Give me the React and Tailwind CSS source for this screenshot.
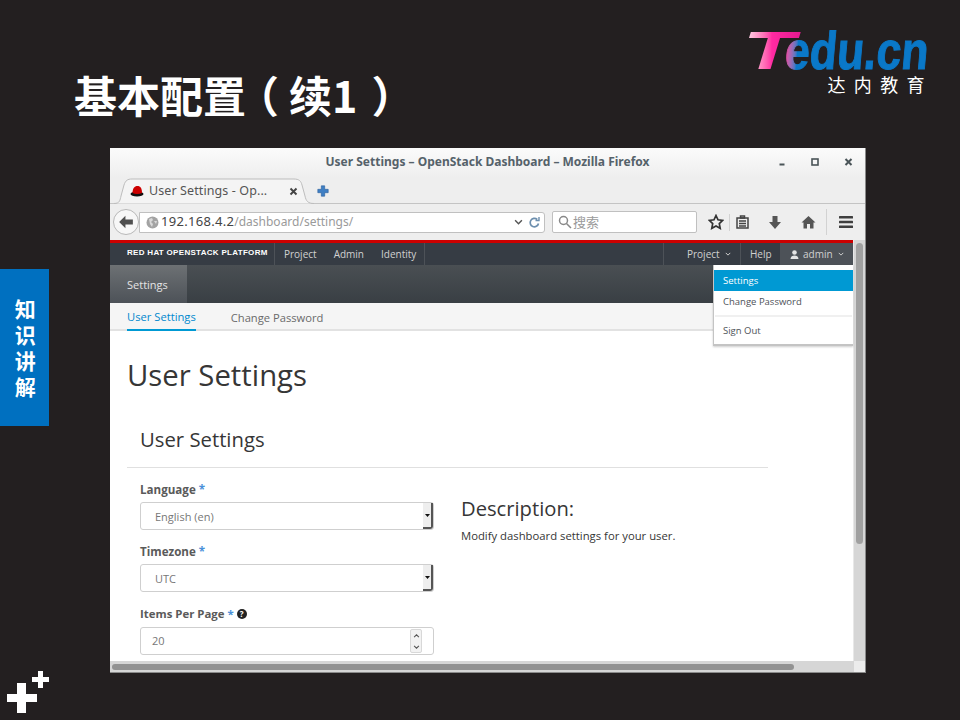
import React from "react";

const uiFont = "font-['Open_Sans','Noto_Sans',sans-serif]";

// Plain chevron used in the nav bar and url bar
const Chevron = ({ className }) => (
    <svg viewBox="0 0 8 5" className={className} fill="none" stroke="currentColor" strokeWidth="1.3">
        <path d="M1 1l3 3 3-3" />
    </svg>
);

const BrowserChrome = () => (
    <div className="shrink-0">
        {/* Title bar */}
        <div className="h-[30px] bg-gradient-to-b from-[#fbfbfb] to-[#eeeeee] flex items-center relative">
            <div className="flex-1 text-center text-[12px] font-bold text-[#55626a] font-['Noto_Sans',sans-serif] -mt-[2px]">
                User Settings – OpenStack Dashboard – Mozilla Firefox
            </div>
            <div className="absolute right-[12px] top-[9px] flex items-center gap-[25px] text-[#4a5458]">
                <svg width="7" height="10" viewBox="0 0 7 10"><rect x="0.5" y="6.5" width="5" height="2" fill="currentColor" /></svg>
                <svg width="8" height="10" viewBox="0 0 8 10"><rect x="1" y="2" width="6" height="6" fill="none" stroke="currentColor" strokeWidth="1.6" /></svg>
                <svg width="9" height="10" viewBox="0 0 9 10" stroke="currentColor" strokeWidth="2"><path d="M1.5 2l6 6M7.5 2l-6 6" /></svg>
            </div>
        </div>
        {/* Tab strip */}
        <div className="h-[26px] bg-[#eeeeee] flex items-end pl-[4px] border-b border-[#c4c4c4]">
            <div className="relative w-[200px] h-[26px] -mb-px flex items-center pl-[17px] pr-[14px]">
                <svg width="200" height="26" viewBox="0 0 200 26" className="absolute left-0 top-0">
                    <path d="M0 25.500C6 25.500 6 22 7 18L10 7C11.500 2.500 13.500 1 18 1H180C185 1 187 3 188 7L191 18C192 23 194 25.500 200 25.500" fill="#f4f4f4" stroke="#bdbdbd" />
                </svg>
                <svg width="14" height="12" viewBox="0 0 14 12" className="relative shrink-0 -ml-[1px] -mt-[1px]">
                    <ellipse cx="7" cy="9" rx="6.5" ry="2.6" fill="#111" />
                    <path d="M2.5 8C2.5 3.5 4.5 1 7.5 1S12 3.500 12 8c-3 1.300-7 1.300-9.500 0z" fill="#cc0000" />
                </svg>
                <span className="relative ml-[5px] text-[12.5px] text-[#555] tracking-[0.1px] font-['Noto_Sans',sans-serif]">User Settings - Op...</span>
                <svg width="9" height="9" viewBox="0 0 9 9" stroke="#444" strokeWidth="1.900" className="relative ml-auto -translate-x-[2px]"><path d="M1.500 1.500l6 6M7.500 1.500l-6 6" /></svg>
            </div>
            <svg width="12" height="12" viewBox="0 0 12 12" className="ml-[3px] mb-[6px]">
                <path d="M4.300 0.800h3.400v3.500h3.500v3.400H7.700v3.500H4.300V7.700H0.800V4.300h3.500z" fill="#3f7fc4" stroke="#2c5f9c" strokeWidth="0.600" />
            </svg>
        </div>
        {/* Navigation toolbar */}
        <div className="h-[36px] bg-[#eeeeee] flex items-center relative pl-[29px] pr-[8px]">
            <div className="absolute left-[3px] top-[5px] w-[26px] h-[26px] rounded-full bg-[#f7f7f7] border border-[#b8b8b8] flex items-center justify-center z-10">
                <svg width="16" height="14" viewBox="0 0 14 12" fill="#4f4f4f"><path d="M6.500 0.500L1 6l5.500 5.500V8.200H13V3.800H6.500z" /></svg>
            </div>
            <div className="w-[406px] h-[21px] bg-white border border-[#c0c0c0] rounded-r-[3px] flex items-center pl-[6px] pr-[3px]">
                <svg width="13" height="13" viewBox="0 0 13 13" className="shrink-0">
                    <circle cx="6.500" cy="6.500" r="6" fill="#a3a3a3" />
                    <path d="M3 3l3-1 1 2-2 2 2 2-1 3-2-3zM8 5h3l-1 3z" fill="#d9d9d9" />
                </svg>
                <span className="ml-[2px] text-[13px] tracking-[0.3px] text-[#444] font-['Noto_Sans',sans-serif]">
                    192.168.4.2<span className="text-[12px] tracking-normal text-[#9a9a9a]">/dashboard/settings/</span>
                </span>
                <Chevron className="ml-auto w-[9px] h-[6px] text-[#555]" />
                <svg width="13" height="13" viewBox="0 0 13 13" fill="none" stroke="#6d8fae" strokeWidth="1.700" className="ml-[5px]">
                    <path d="M10.500 7.500a4.200 4.200 0 1 1-1.300-4" />
                    <path d="M11 1v3.500H7.500" strokeWidth="1.400" />
                </svg>
            </div>
            <div className="w-[145px] h-[22px] ml-[7px] bg-white border border-[#c0c0c0] rounded-[2px] flex items-center pl-[5px]">
                <svg width="14" height="14" viewBox="0 0 14 14" fill="none" stroke="#888" strokeWidth="1.500">
                    <circle cx="5.500" cy="5.500" r="4" /><path d="M8.500 8.500l4.500 4.500" />
                </svg>
                <span className="ml-[1px] text-[13px] text-[#9a9a9a] font-['Noto_Sans_CJK_SC',sans-serif]">搜索</span>
            </div>
            <div className="flex-1 flex items-center text-[#444]">
                <svg width="16" height="16" viewBox="0 0 16 16" className="ml-[11px]" fill="none" stroke="#333" strokeWidth="1.700">
                    <path d="M8 1.500l2 4.300 4.700.6-3.400 3.200.9 4.700L8 12l-4.200 2.300.9-4.700L1.300 6.400 6 5.800z" />
                </svg>
                <div className="w-px h-[17px] bg-[#d2d2d2] ml-[5px]" />
                <svg width="13" height="14" viewBox="0 0 13 14" className="ml-[6px]" fill="none" stroke="#444" strokeWidth="1.500">
                    <path d="M1 3h11v10H1z" /><path d="M4.500 1h4v2h-4zM3 6h7M3 8.500h7M3 11h7" />
                </svg>
                <svg width="14" height="15" viewBox="0 0 14 15" className="ml-[19px]" fill="#555"><path d="M4.500 1h5v6H13l-6 7-6-7h3.500z" /></svg>
                <svg width="15" height="14" viewBox="0 0 15 14" className="ml-[19px]" fill="#555"><path d="M7.500 1L.5 7.500h2V13.500h3.500V9h3v4.500h3.500V7.500h2z" /></svg>
                <div className="w-px h-[26px] bg-[#d2d2d2] ml-[10px]" />
                <svg width="14" height="12" viewBox="0 0 14 12" className="ml-[12px]" fill="#3f3f3f">
                    <rect width="14" height="2.400" rx="0.500" /><rect y="4.800" width="14" height="2.400" rx="0.500" /><rect y="9.600" width="14" height="2.400" rx="0.500" />
                </svg>
            </div>
        </div>
    </div>
);

const NavBar = () => (
    <div className="relative shrink-0">
        <div className="h-[3px] bg-[#cc0000]" />
        <div className="h-[22px] bg-[#363c44] flex text-[10px] text-[#d1d1d1]">
            <div className="w-[165px] border-r border-[#4d5258] pl-[17px] pb-[2px] flex items-center text-[8px] font-bold text-white tracking-[0.3px] font-['Liberation_Sans',sans-serif]">
                RED HAT OPENSTACK PLATFORM
            </div>
            <div className="flex items-center border-r border-[#4d5258] pl-[9px] pr-[8px] gap-[17px]">
                <span>Project</span>
                <span>Admin</span>
                <span>Identity</span>
            </div>
            <div className="ml-auto flex">
                <div className="flex items-center w-[77px] border-l border-[#4d5258] pl-[23px]">
                    Project<Chevron className="w-[6px] h-[4px] ml-[5px]" />
                </div>
                <div className="flex items-center w-[40px] border-l border-[#4d5258] pl-[9px]">Help</div>
                <div className="flex items-center w-[73px] bg-[#4d5258] pl-[10px]">
                    <svg width="9" height="9" viewBox="0 0 9 9" fill="#e4e4e4"><circle cx="4.500" cy="2.500" r="2.300" /><path d="M0.500 9c0-2.500 2-3.500 4-3.500s4 1 4 3.500z" /></svg>
                    <span className="ml-[4px]">admin</span>
                    <Chevron className="w-[6px] h-[4px] ml-[5px]" />
                </div>
            </div>
        </div>
        {/* Open user menu */}
        <div className="absolute right-0 top-[25px] w-[140px] h-[81px] bg-white border-b-2 border-l border-[#c4c4c4] shadow-[0_1px_2px_rgba(0,0,0,0.2)] pt-[5px] text-[9.5px] text-[#4d5258] z-20">
            <div className="h-[21px] bg-[#0099d3] text-white pl-[9px] pt-[1px] flex items-center">Settings</div>
            <div className="h-[21px] pl-[9px] pt-[1px] flex items-center">Change Password</div>
            <div className="h-[2px] bg-[#f0f0f0] mx-[1px] mt-[3px]" />
            <div className="h-[26px] pl-[9px] pt-[2px] flex items-center">Sign Out</div>
        </div>
    </div>
);

const SelectField = ({ label, value }) => (
    <div>
        <div className="pt-[1px] text-[11.6px] font-bold text-[#5a5a5a] leading-[15px]">
            {label} <span className="text-[#4a90d9]">*</span>
        </div>
        <div className="mt-[5px] w-[294px] h-[28px] bg-white border border-[#cfcfcf] rounded-[3px] flex justify-between pl-[14px] text-[11px] leading-[28px] text-[#777]">
            {value}
            <div className="w-[10px] h-full bg-[#eeeeee] border-r-2 border-b-2 border-[#555] rounded-br-[3px] flex items-center justify-center">
                <svg width="5" height="3" viewBox="0 0 5 3" fill="#111"><path d="M0 0h5L2.500 3z" /></svg>
            </div>
        </div>
    </div>
);

const SettingsPage = () => (
    <div className="flex-1 min-w-0 flex flex-col overflow-hidden bg-white">
        {/* Section bar */}
        <div className="h-[38px] shrink-0 bg-gradient-to-b from-[#4a4f53] to-[#393f44] flex">
            <div className="w-[77px] bg-gradient-to-b from-[#6d7174] to-[#4d5258] flex items-center pl-[17px] pt-[2px] text-[11px] text-[#e4e4e4]">Settings</div>
        </div>
        {/* Tabs */}
        <div className="h-[28px] shrink-0 bg-[#f5f5f5] border-b-2 border-[#e2e2e2] flex text-[11.2px] pl-[17px] gap-[35px]">
            <div className="h-[28px] border-b-2 border-[#0099d3] text-[#0088ce] flex items-center pt-[2px]">User Settings</div>
            <div className="text-[#6a6a6a] flex items-center h-[28px] pt-[2px]">Change Password</div>
        </div>
        <div className="pl-[17px]">
            <h1 className="mt-[24px] text-[29.3px] leading-[40px] text-[#363636]">User Settings</h1>
            <div className="mt-[26px] w-[641px] h-[47px] border-b border-[#e0e0e0] pl-[13px]">
                <h2 className="text-[20.3px] leading-[28px] text-[#363636] pt-[4px]">User Settings</h2>
            </div>
            <div className="flex pl-[13px] pt-[13px]">
                <div className="w-[321px] flex flex-col gap-[13px]">
                    <SelectField label="Language" value="English (en)" />
                    <SelectField label="Timezone" value="UTC" />
                    <div>
                        <div className="text-[11.4px] font-bold text-[#5a5a5a] leading-[15px] flex items-center mt-[1px]">
                            Items Per Page <span className="text-[#4a90d9] ml-[3px]">*</span>
                            <span className="ml-[3px] w-[10px] h-[10px] rounded-full bg-[#222] text-white text-[8px] font-bold leading-[10px] text-center">?</span>
                        </div>
                        <div className="mt-[6px] w-[294px] h-[28px] border border-[#cfcfcf] rounded-[3px] flex items-center justify-between pl-[11px] pr-[11px] text-[11px] leading-[28px] text-[#777]">
                            20
                            <div className="w-[12px] h-[24px] bg-[#f2f2f2] border border-[#d8d8d8] rounded-[2px] flex flex-col items-center justify-around text-[#555]">
                                <Chevron className="w-[7px] h-[4px] rotate-180" />
                                <Chevron className="w-[7px] h-[4px]" />
                            </div>
                        </div>
                    </div>
                </div>
                <div className="pt-[13px]">
                    <h3 className="text-[20.2px] leading-[28px] text-[#363636]">Description:</h3>
                    <p className="mt-[6px] text-[11.3px] leading-[16px] text-[#363636]">Modify dashboard settings for your user.</p>
                </div>
            </div>
        </div>
    </div>
);

const BrowserWindow = () => (
    <div className={`w-[756px] h-[525px] flex flex-col overflow-hidden border-b border-r border-[#8a8a8a] bg-white ${uiFont}`}>
        <BrowserChrome />
        <div className="flex-1 min-h-0 flex">
            <div className="flex-1 min-w-0 flex flex-col relative">
                <NavBar />
                <SettingsPage />
            </div>
            <div className="w-[12px] shrink-0 bg-[#d6d6d6] border-l border-[#e8e8e8] pt-[3px] pl-[2px]">
                <div className="w-[7px] h-[301px] bg-[#a0a0a0] rounded-full" />
            </div>
        </div>
        {/* Horizontal scrollbar */}
        <div className="h-[11px] shrink-0 bg-[#d6d6d6] flex items-center pl-[2px]">
            <div className="w-[682px] h-[6px] bg-[#929292] rounded-full" />
            <div className="ml-auto w-[11px] h-[11px] bg-[#ececec]" />
        </div>
    </div>
);

const Logo = () => (
    <div className="flex flex-col items-end pt-[25px]">
        <div className="w-[176px] h-[52px] flex text-[53px] leading-[52px] font-bold text-[#0a78c8] whitespace-nowrap font-['Liberation_Sans',sans-serif]">
            <span className="inline-block w-[40px] -ml-[6px] shrink-0 origin-left italic scale-x-[1.6] bg-gradient-to-r from-[#fbeaf3] via-[#ff2aa2] via-[45%] to-[#e0148c] bg-clip-text text-transparent">T</span>
            <span className="inline-block origin-bottom-left scale-x-[0.84] -skew-x-[6deg] [-webkit-text-stroke:1px_#0a78c8]">
                <span className="bg-gradient-to-r from-[#f5389f] to-[#0a78c8] to-[50%] bg-clip-text text-transparent [-webkit-text-stroke:1px_transparent]">e</span>du.cn
            </span>
        </div>
        <div className="text-[18px] leading-[24px] text-white tracking-[8.400px] -mr-[8px] -mt-[5px] font-['Noto_Sans_CJK_SC',sans-serif]">达内教育</div>
    </div>
);

const App = () => {
    return (
        <div className="w-[960px] h-[720px] bg-[#231f20] overflow-hidden flex flex-col font-['Noto_Sans_CJK_SC',sans-serif]">
            <header className="h-[148px] shrink-0 flex justify-between pl-[74px] pr-[35px]">
                <h1 className="pt-[62px] text-[43px] leading-[64px] font-bold text-white whitespace-nowrap">
                    基本配置<span className="-ml-[10px] mr-[10px]">（</span>续1<span className="ml-[14px]">）</span>
                </h1>
                <Logo />
            </header>
            <div className="flex-1 flex min-h-0">
                <aside className="w-[110px] shrink-0 flex flex-col">
                    <div className="mt-[121px] w-[49px] h-[157px] bg-[#0070c0] flex items-center justify-center pt-[7px] text-[21px] tracking-[5px] font-bold text-white [writing-mode:vertical-rl]">
                        知识讲解
                    </div>
                    <svg width="42" height="42" viewBox="0 0 42 42" fill="#fff" className="mt-auto mb-[7px] ml-[7px]">
                        <path d="M10 12h9v11h11v8H19v11h-9V31H0v-8h10z" />
                        <path d="M31 0h5v6h6v5h-6v6h-5v-6h-6V6h6z" />
                    </svg>
                </aside>
                <BrowserWindow />
            </div>
        </div>
    );
};

export default App;
